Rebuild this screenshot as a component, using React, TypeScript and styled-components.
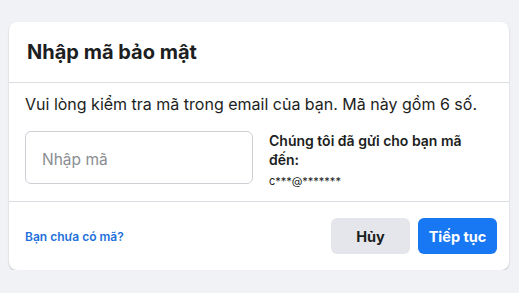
import styled, { createGlobalStyle } from "styled-components";

const GlobalStyle = createGlobalStyle`
  html, body {
    margin: 0;
    padding: 0;
    background-color: #f0f2f5;
    font-family: Inter, "Noto Sans", "Liberation Sans", sans-serif;
    color: #1c1e21;
  }
`;

const Page = styled.div`
  padding: 22px 10px 0 9px;
`;

const Card = styled.div`
  width: 500px;
  background-color: #fff;
  border-radius: 8px;
  box-shadow: 0 1px 2px rgba(0, 0, 0, 0.2);
  overflow: hidden;
`;

const Header = styled.div`
  display: flex;
  align-items: center;
  height: 60px;
  padding: 0 18px;
  border-bottom: 1px solid #dadde1;
`;

const Title = styled.h2`
  margin: 0;
  font-size: 20px;
  font-weight: 700;
  color: #1c1e21;
`;

const Body = styled.div`
  padding: 10px 16px 17px;
  border-bottom: 1px solid #dadde1;
`;

const Lead = styled.p`
  margin: 0 0 16px;
  font-size: 16px;
  line-height: 22px;
`;

const Row = styled.div`
  display: flex;
  align-items: flex-start;
  gap: 16px;
  height: 53px;
`;

const CodeInput = styled.input`
  box-sizing: border-box;
  width: 228px;
  height: 53px;
  padding: 4px 16px 0;
  border: 1px solid #ccd0d5;
  border-radius: 6px;
  font-family: inherit;
  font-size: 15.5px;
  color: #1c1e21;
  &::placeholder {
    color: #8a8d91;
  }
`;

const Info = styled.div`
  width: 210px;
`;

const InfoText = styled.div`
  font-size: 14px;
  font-weight: 600;
  line-height: 19px;
`;

const Email = styled.div`
  margin-top: 5px;
  font-size: 11px;
  line-height: 14px;
`;

const Footer = styled.div`
  display: flex;
  align-items: center;
  justify-content: space-between;
  padding: 16px 12px 16px 16px;
`;

const Link = styled.a`
  font-size: 12px;
  font-weight: 600;
  color: #216fdb;
  text-decoration: none;
`;

const Actions = styled.div`
  display: flex;
  gap: 8px;
`;

const Button = styled.button<{ primary?: boolean }>`
  width: 79px;
  height: 36px;
  border: none;
  border-radius: 6px;
  font-family: inherit;
  font-size: 14.5px;
  font-weight: 700;
  background-color: ${({ primary }) => (primary ? "#1877f2" : "#e4e6eb")};
  color: ${({ primary }) => (primary ? "#fff" : "#1c1e21")};
  cursor: pointer;
`;

const App = () => {
  return (
    <Page>
      <GlobalStyle />
      <Card>
        <Header>
          <Title>Nhập mã bảo mật</Title>
        </Header>
        <Body>
          <Lead>Vui lòng kiểm tra mã trong email của bạn. Mã này gồm 6 số.</Lead>
          <Row>
            <CodeInput placeholder="Nhập mã" />
            <Info>
              <InfoText>Chúng tôi đã gửi cho bạn mã đến:</InfoText>
              <Email>c***@*******</Email>
            </Info>
          </Row>
        </Body>
        <Footer>
          <Link href="#">Bạn chưa có mã?</Link>
          <Actions>
            <Button>Hủy</Button>
            <Button primary>Tiếp tục</Button>
          </Actions>
        </Footer>
      </Card>
    </Page>
  );
};

export default App;
